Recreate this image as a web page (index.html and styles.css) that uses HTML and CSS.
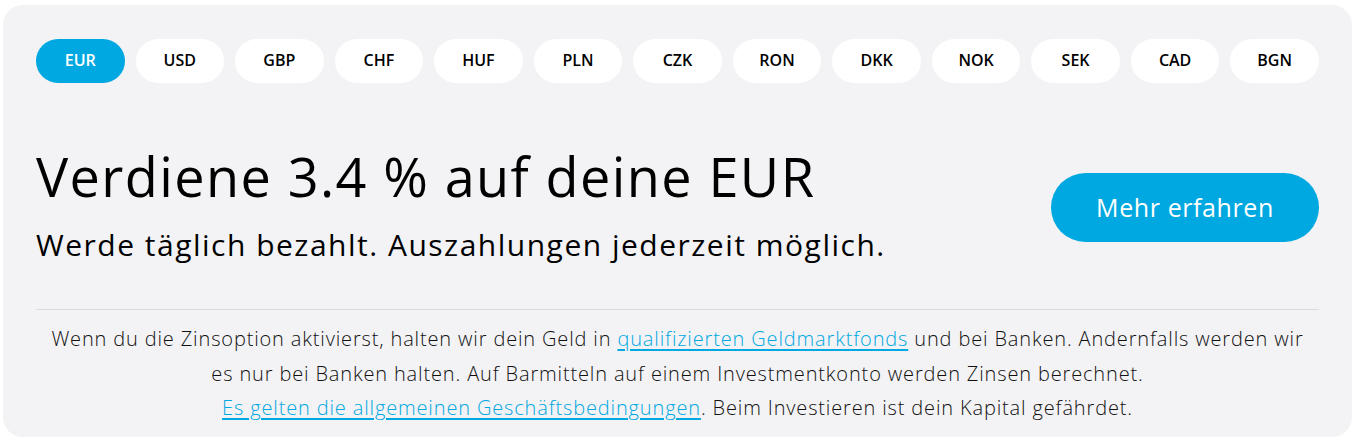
FILE: index.html
```html
<!DOCTYPE html>
<html lang="de">
<head>
<meta charset="utf-8">
<title>Zinsen</title>
<link rel="stylesheet" href="styles.css">
</head>
<body>
<section class="card">
  <nav class="currencies">
    <button class="pill active">EUR</button>
    <button class="pill">USD</button>
    <button class="pill">GBP</button>
    <button class="pill">CHF</button>
    <button class="pill">HUF</button>
    <button class="pill">PLN</button>
    <button class="pill">CZK</button>
    <button class="pill">RON</button>
    <button class="pill">DKK</button>
    <button class="pill">NOK</button>
    <button class="pill">SEK</button>
    <button class="pill">CAD</button>
    <button class="pill">BGN</button>
  </nav>
  <div class="hero">
    <div class="hero-text">
      <h1 class="title">Verdiene 3.4 % auf deine EUR</h1>
      <p class="subtitle">Werde täglich bezahlt. Auszahlungen jederzeit möglich.</p>
    </div>
    <a class="cta" href="#">Mehr erfahren</a>
  </div>
  <p class="note">Wenn du die Zinsoption aktivierst, halten wir dein Geld in <a class="link" href="#">qualifizierten Geldmarktfonds</a> und bei Banken. Andernfalls werden wir<br>es nur bei Banken halten. Auf Barmitteln auf einem Investmentkonto werden Zinsen berechnet.<br><a class="link" href="#">Es gelten die allgemeinen Geschäftsbedingungen</a>. Beim Investieren ist dein Kapital gefährdet.</p>
</section>
</body>
</html>
```

FILE: styles.css
```css
html, body {
  margin: 0;
  padding: 0;
  background: #ffffff;
}

body {
  font-family: "Open Sans", "DejaVu Sans", sans-serif;
  color: #000000;
}

.card {
  margin: 5px 1px 0 3px;
  height: 432px;
  box-sizing: border-box;
  padding: 34px 33px 0 33px;
  background: #f3f3f5;
  border-radius: 20px;
}

.currencies {
  display: flex;
  gap: 11px;
}

.pill {
  flex: 1 1 0;
  height: 44px;
  border: none;
  border-radius: 22px;
  background: #ffffff;
  color: #000000;
  font-family: inherit;
  font-size: 16px;
  font-weight: 600;
  padding: 0 0 2px 0;
  cursor: pointer;
}

.pill.active {
  background: #00a8e1;
  color: #ffffff;
}

.hero {
  display: flex;
  align-items: center;
  justify-content: space-between;
  padding: 62px 0 44px 0;
  border-bottom: 1px solid #dcdcdf;
}

.hero-text {
  display: flex;
  flex-direction: column;
}

.title {
  margin: 0;
  font-size: 54px;
  font-weight: 400;
  line-height: 62px;
  letter-spacing: 1.4px;
}

.subtitle {
  margin: 18px 0 0 0;
  font-size: 30px;
  font-weight: 500;
  line-height: 40px;
  letter-spacing: 1.5px;
}

.cta {
  display: flex;
  align-items: center;
  justify-content: center;
  width: 268px;
  height: 69px;
  margin-top: 4px;
  border-radius: 35px;
  background: #00a8e1;
  color: #ffffff;
  font-size: 25px;
  font-weight: 500;
  letter-spacing: 0.6px;
  text-decoration: none;
}

.note {
  margin: 0;
  padding-top: 12px;
  text-align: center;
  font-size: 20px;
  font-weight: 300;
  line-height: 34.5px;
  letter-spacing: 0.85px;
  color: #111111;
}

.link {
  color: #00a8e1;
  text-decoration: underline;
  text-underline-offset: 3px;
}
```
